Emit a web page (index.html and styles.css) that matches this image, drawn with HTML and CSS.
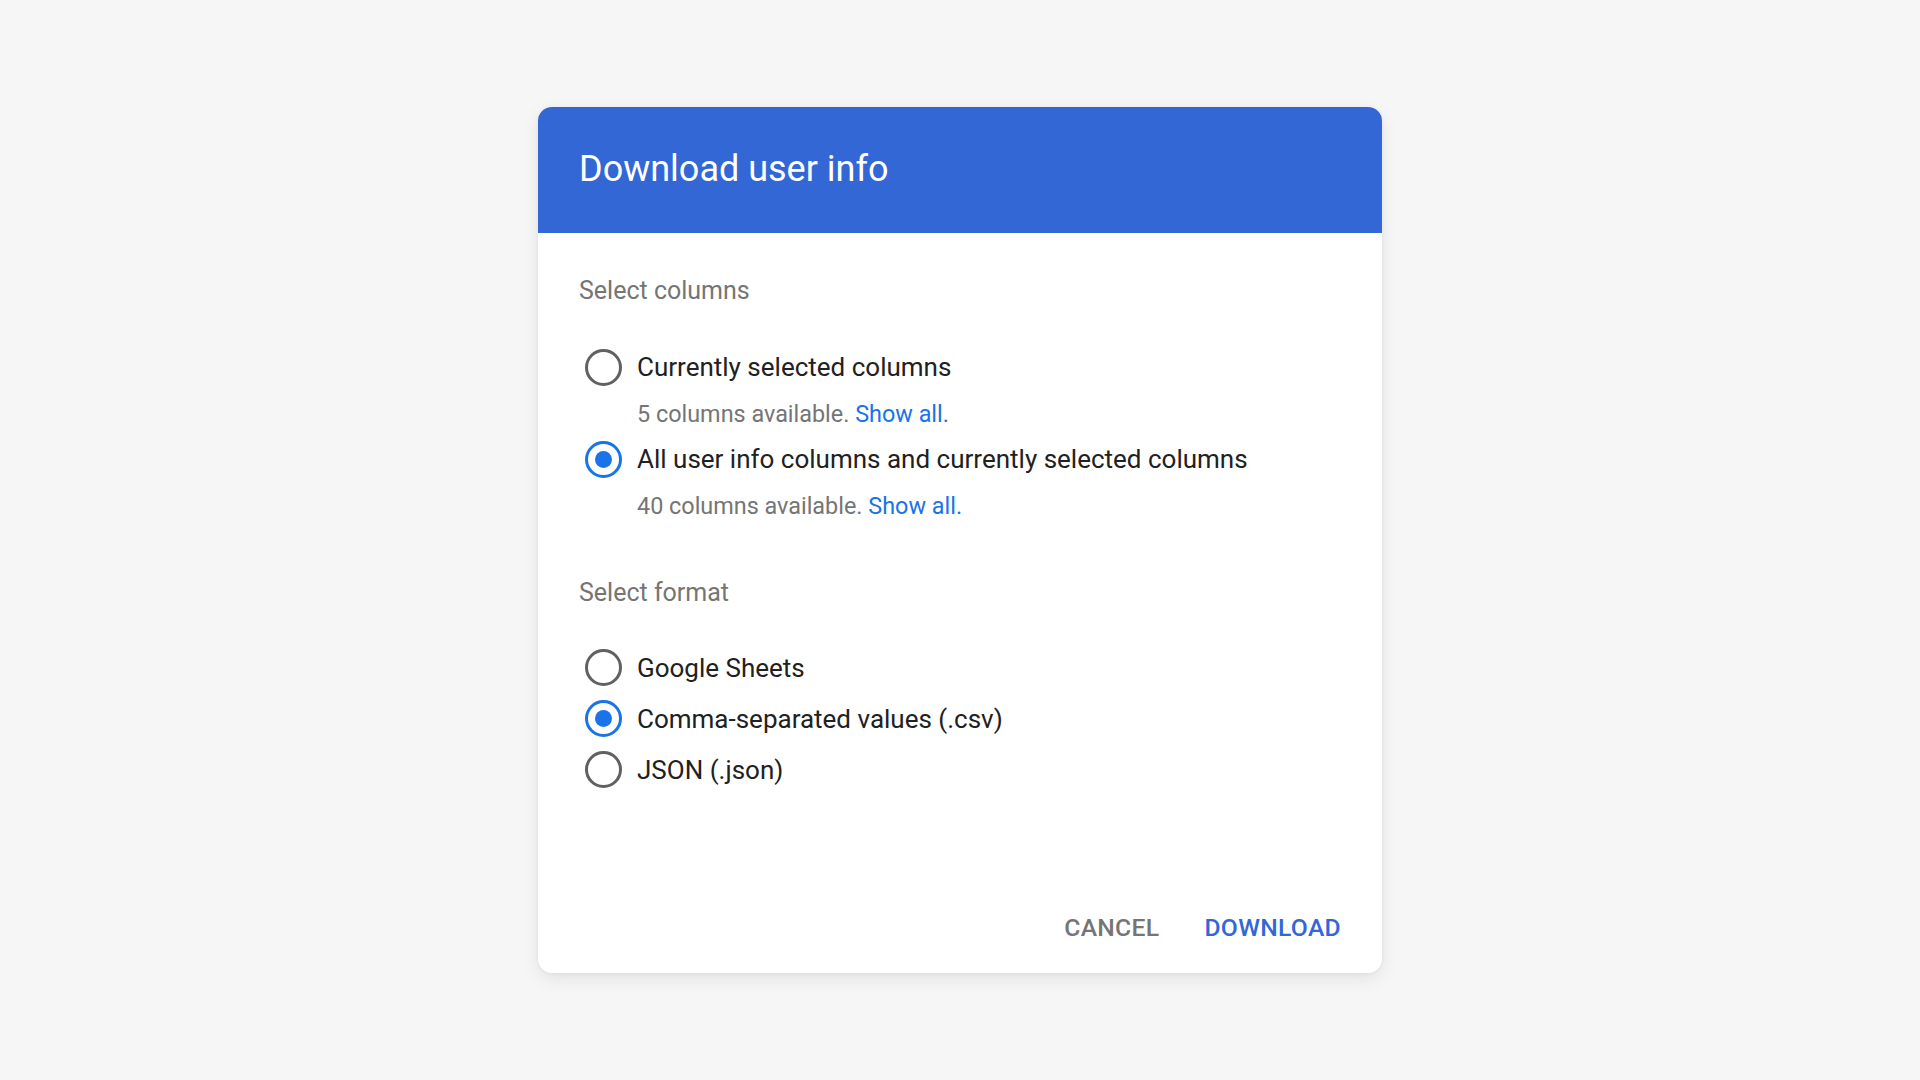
FILE: index.html
```html
<!DOCTYPE html>
<html lang="en">
<head>
<meta charset="utf-8">
<title>Download user info</title>
<link rel="stylesheet" href="styles.css">
</head>
<body>
<div class="page">
  <div class="dialog">
    <div class="dialog-header">
      <h1 class="dialog-title">Download user info</h1>
    </div>
    <div class="dialog-body">
      <div class="section-label">Select columns</div>
      <div class="group group-columns">
        <div class="option">
          <span class="radio"></span>
          <span class="option-text">Currently selected columns</span>
        </div>
        <div class="option-sub">5 columns available. <a class="link">Show all.</a></div>
        <div class="option">
          <span class="radio checked"></span>
          <span class="option-text">All user info columns and currently selected columns</span>
        </div>
        <div class="option-sub">40 columns available. <a class="link">Show all.</a></div>
      </div>
      <div class="section-label section-format">Select format</div>
      <div class="group group-format">
        <div class="option option-fmt">
          <span class="radio"></span>
          <span class="option-text">Google Sheets</span>
        </div>
        <div class="option option-fmt">
          <span class="radio checked"></span>
          <span class="option-text">Comma-separated values (.csv)</span>
        </div>
        <div class="option option-fmt">
          <span class="radio"></span>
          <span class="option-text">JSON (.json)</span>
        </div>
      </div>
    </div>
    <div class="dialog-footer">
      <button class="btn btn-cancel">CANCEL</button>
      <button class="btn btn-primary">DOWNLOAD</button>
    </div>
  </div>
</div>
</body>
</html>
```

FILE: styles.css
```css
html, body {
  margin: 0;
  padding: 0;
  height: 100%;
}
body {
  background: #f6f6f6;
  font-family: Roboto, "Liberation Sans", Arial, sans-serif;
}
.page {
  height: 100vh;
  display: flex;
  align-items: center;
  justify-content: center;
}
.dialog {
  width: 844px;
  height: 866px;
  background: #ffffff;
  border-radius: 14px;
  box-shadow: 0 6px 18px rgba(0, 0, 0, 0.08), 0 1px 4px rgba(0, 0, 0, 0.05);
  display: flex;
  flex-direction: column;
  overflow: hidden;
}
.dialog-header {
  background: #3367d6;
  height: 126px;
  padding: 0 41px;
  display: flex;
  align-items: center;
  box-sizing: border-box;
}
.dialog-title {
  margin: 0;
  margin-top: -2px;
  color: #ffffff;
  font-weight: 400;
  font-size: 36px;
  line-height: 44px;
}
.dialog-body {
  padding: 43px 42px 0 41px;
}
.section-label {
  font-size: 25px;
  line-height: 30px;
  color: #757575;
}
.group-columns {
  margin-top: 38px;
}
.option {
  display: flex;
  align-items: center;
  height: 46px;
}
.option-fmt {
  height: 51px;
}
.radio {
  box-sizing: border-box;
  width: 37px;
  height: 37px;
  margin-left: 6px;
  margin-right: 15px;
  border: 3.5px solid #616161;
  border-radius: 50%;
  display: flex;
  align-items: center;
  justify-content: center;
  flex: none;
}
.radio.checked {
  border-color: #1a73e8;
}
.radio.checked::after {
  content: "";
  width: 17px;
  height: 17px;
  border-radius: 50%;
  background: #1a73e8;
}
.option-text {
  font-size: 26px;
  color: #212121;
}
.option-sub {
  height: 46px;
  line-height: 46px;
  padding-top: 1px;
  padding-left: 58px;
  font-size: 23.4px;
  color: #757575;
  box-sizing: border-box;
}
.link {
  color: #1a73e8;
  text-decoration: none;
}
.section-format {
  margin-top: 50px;
}
.group-format {
  margin-top: 34px;
}
.dialog-footer {
  margin-top: auto;
  display: flex;
  justify-content: flex-end;
  align-items: center;
  gap: 45px;
  padding: 0 41px 21px 0;
  height: 48px;
}
.btn {
  background: none;
  border: none;
  padding: 0;
  font-family: Roboto, "Liberation Sans", Arial, sans-serif;
  font-weight: 500;
  font-size: 24.7px;
  line-height: 48px;
  letter-spacing: 0.3px;
  cursor: pointer;
}
.btn-cancel {
  color: #757575;
}
.btn-primary {
  color: #3367d6;
}
```
